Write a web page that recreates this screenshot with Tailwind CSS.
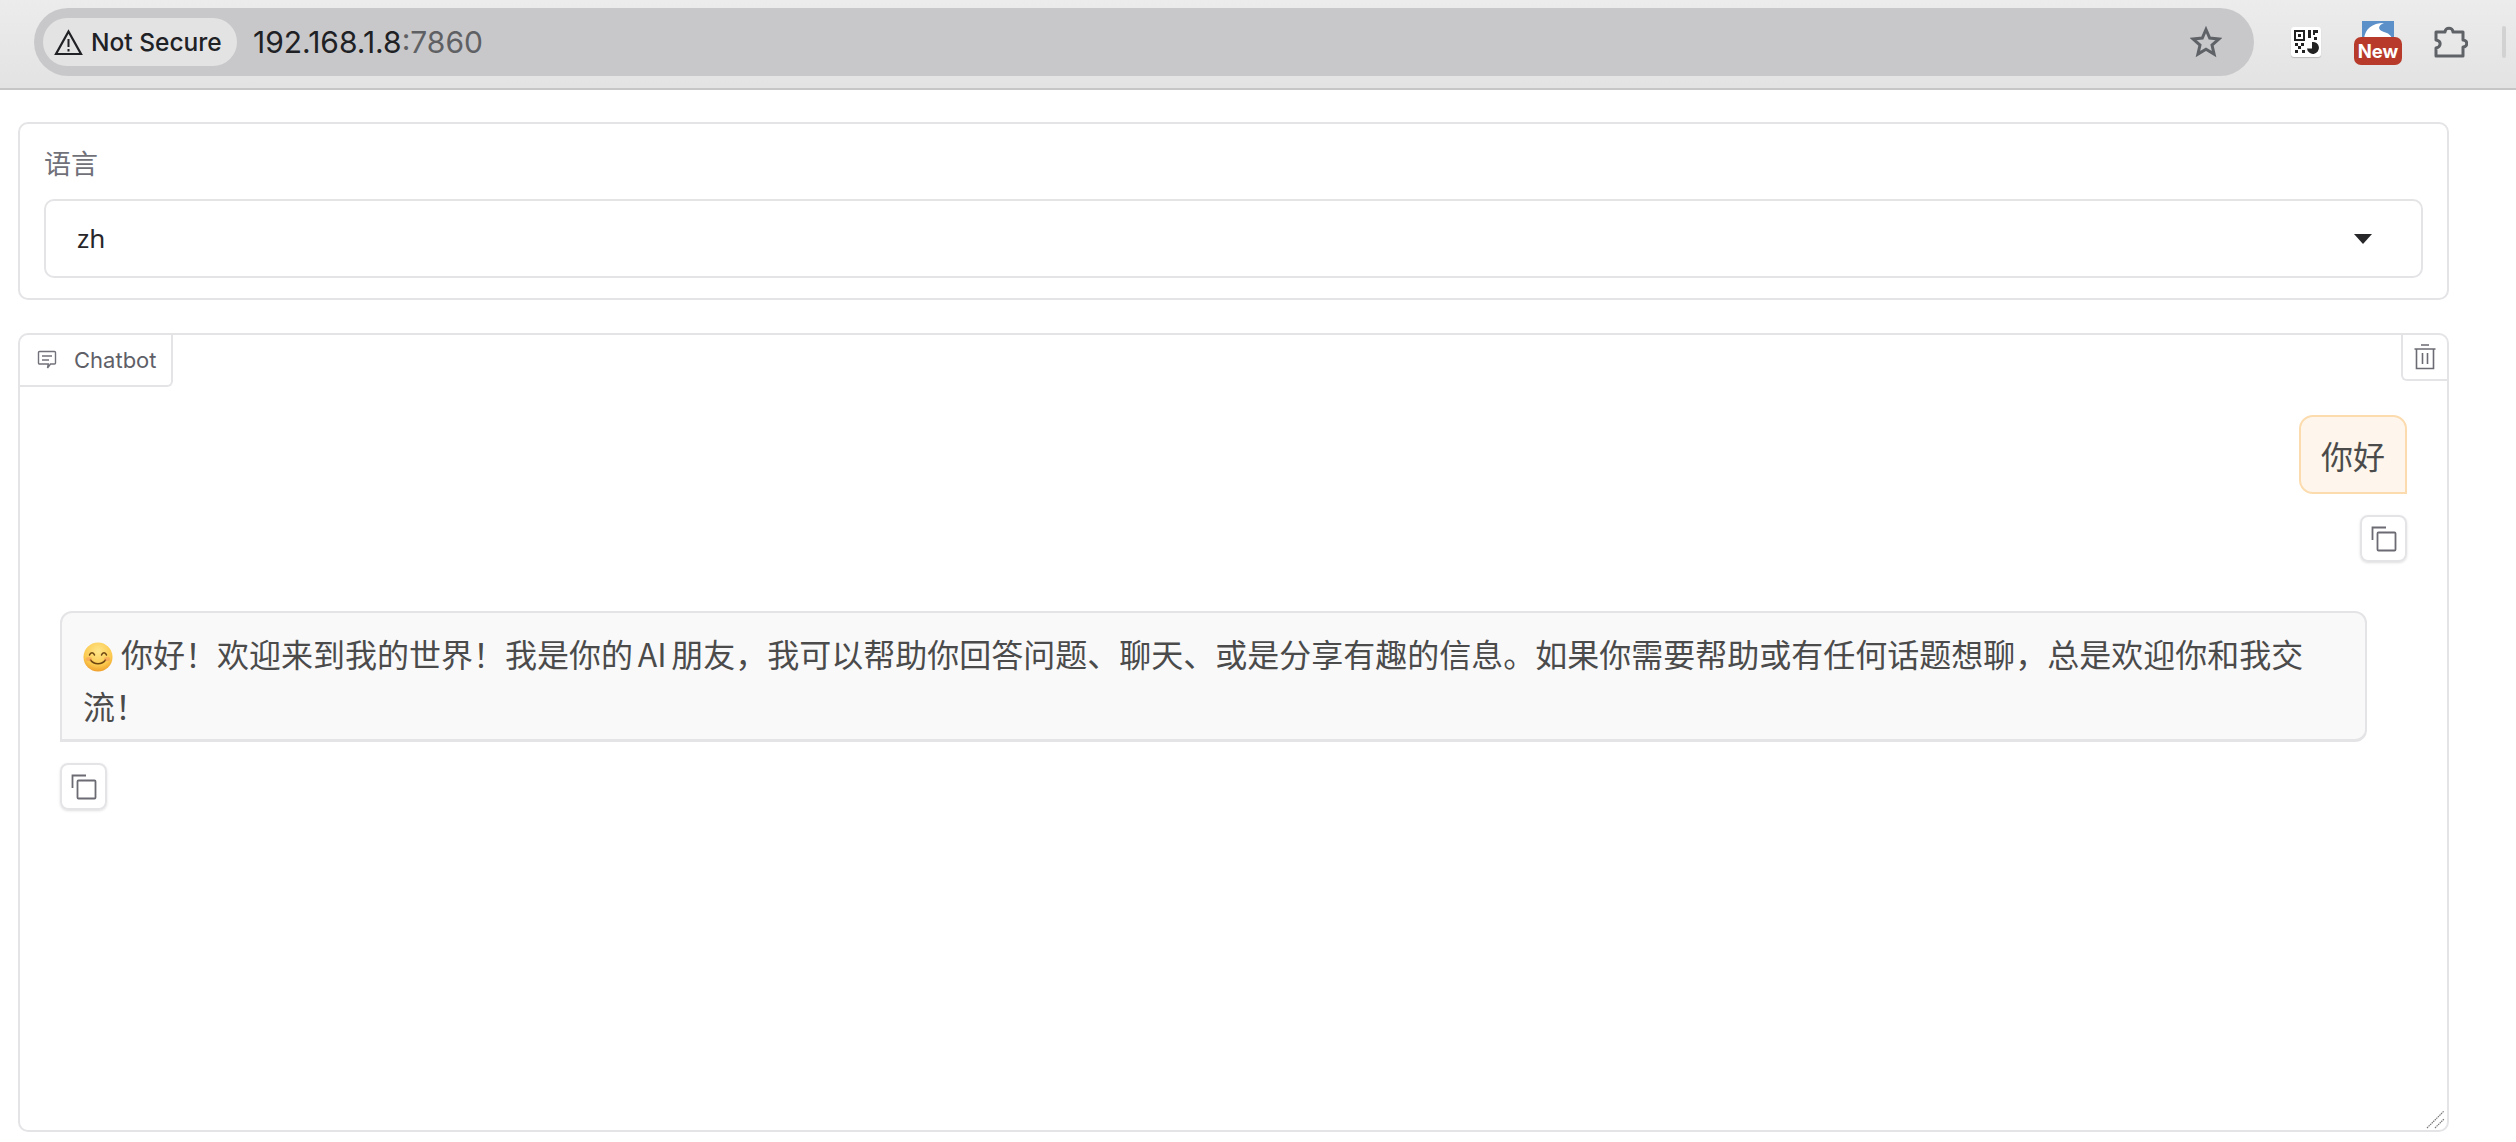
<!DOCTYPE html>
<html lang="zh">
<head>
    <meta charset="UTF-8">
    <title>Gradio</title>
    <script src="https://cdn.jsdelivr.net/npm/@tailwindcss/browser@4"></script>
</head>
<body class="bg-white overflow-hidden font-['Inter','Noto_Sans_CJK_SC',sans-serif]">

    <!-- browser toolbar -->
    <div class="flex items-center h-[90px] pl-[34px] pb-[4px] border-b-2 border-[#c6c6c6] bg-gradient-to-b from-[#ececec] to-[#e3e3e3]">
        <div class="flex items-center w-[2220px] h-[68px] pl-[9px] pr-[32px] rounded-full bg-[#c8c8ca]">
            <div class="flex items-center gap-[8px] w-[194px] h-[48px] pl-[11px] rounded-full bg-[#e3e3e4]">
                <svg width="29" height="27" viewBox="0 0 29 27" fill="none" stroke="#202124" stroke-width="2.200"><path d="M14.500 2.500 L27 25 H2 Z"/><path d="M14.500 10v8M14.500 20v2.500" stroke-width="2"/></svg>
                <span class="text-[24.500px] leading-none font-medium text-[#202124]">Not Secure</span>
            </div>
            <div class="ml-[16px] text-[30px] leading-none text-[#202124]">192.168.1.8<span class="text-[#5f6063]">:7860</span></div>
            <svg class="ml-auto" width="32" height="32" viewBox="0 0 32 32" fill="none" stroke="#5f6368" stroke-width="3"><path d="M16 3.500l3.700 8.600 9.300.8-7 6.100 2.100 9.100-8.100-4.800-8.100 4.800 2.100-9.100-7-6.100 9.300-.8z"/></svg>
        </div>

        <div class="ml-[37px] w-[30px] h-[30px] rounded-[3px] bg-white shadow-[0_1px_1px_#bbb]">
            <svg width="30" height="30" viewBox="0 0 30 30" fill="#222">
                <path fill-rule="evenodd" d="M3 3h11v11H3zM5 5v7h7V5z"/><path d="M7 7h3v3H7zM17 3h3v8h-3zM22 3h5v3h-3v2h-2zM23 10h3v3h-3zM4 16h3v3H4zM10 16h3v3h-3zM7 19h3v3H7zM4 23h3v3H4zM11 23h3v3h-3zM21 15a6 6 0 1 1-5 6.500h5z"/>
            </svg>
        </div>

        <div class="relative ml-[33px] w-[48px] h-[46px] mt-[6px]">
            <svg class="absolute left-[8px] top-[-1px]" width="32" height="18" viewBox="0 0 32 18">
                <rect width="32" height="18" fill="#5c90c9"/>
                <path d="M2 18C3 8 10 2 22 2c-6 2-7 7 0 9 4 1 7 3 8 7z" fill="#fff"/>
            </svg>
            <div class="absolute left-0 top-[15px] flex items-center justify-center w-[48px] h-[28px] rounded-[7px] bg-[#b83a2a] text-white text-[18.500px] font-bold leading-none">New</div>
        </div>

        <svg class="ml-[32px] mt-[2px]" width="34" height="34" viewBox="0 0 34 34" fill="none" stroke="#5f6368" stroke-width="3" stroke-linejoin="round"><path d="M2 6h9c0-5 8-5 8 0h10v8c5 0 5 7 0 7v9H2v-8c5-1 6-7 0-8z"/></svg>

        <div class="ml-[34px] w-[4px] h-[32px] rounded-full bg-[#d2d2d2]"></div>
    </div>

    <div class="pt-[32px] text-[#27272a]">

        <!-- language dropdown -->
        <div class="ml-[18px] w-[2431px] h-[178px] px-[24px] pt-[23px] border-2 border-[#e4e4e7] rounded-[10px]">
            <div class="text-[27px] leading-[36px] text-[#71717a]">语言</div>
            <div class="flex items-center justify-between mt-[16px] w-[2379px] h-[79px] pl-[31px] pr-[49px] border-2 border-[#e4e4e7] rounded-[10px]">
                <span class="text-[26px] font-['Noto_Sans','Noto_Sans_CJK_SC',sans-serif]">zh</span>
                <svg width="18" height="10" viewBox="0 0 18 10" fill="#27272a"><path d="M0 0h18l-9 10z"/></svg>
            </div>
        </div>

        <!-- chatbot -->
        <div class="relative ml-[18px] mt-[33px] w-[2431px] h-[799px] border-2 border-[#e4e4e7] rounded-[10px]">
            <div class="absolute left-0 top-0 flex items-center w-[153px] h-[52px] pl-[17px] border-r-2 border-b-2 border-[#e4e4e7] rounded-br-[6px]">
                <svg width="20" height="20" viewBox="0 0 20 20" fill="none" stroke="#71717a" stroke-width="1.400"><path d="M2.500 1.500h15a1 1 0 0 1 1 1v10.500a1 1 0 0 1-1 1h-4l-3 4 .8-4H2.500a1 1 0 0 1-1-1V2.500a1 1 0 0 1 1-1z"/><path d="M5 6h10M5 10h7"/></svg>
                <span class="ml-[17px] text-[22px] leading-none text-[#5f5f68]">Chatbot</span>
            </div>
            <div class="absolute right-0 top-0 flex items-center justify-center w-[46px] h-[46px] border-l-2 border-b-2 border-[#e4e4e7] rounded-bl-[6px]">
                <svg width="22" height="26" viewBox="0 0 22 26" fill="none" stroke="#6b6b73" stroke-width="1.600"><path d="M7 1h8M.5 5h21M2.500 5v19.500h17V5M8.500 9v11M13.500 9v11"/></svg>
            </div>

            <div class="flex flex-col pt-[80px] px-[40px] text-[#4b4b4b]">
                <div class="flex justify-end">
                    <div class="flex items-center justify-center w-[108px] h-[79px] border-2 border-[#fcdcae] bg-[#fef6ec] rounded-[14px] rounded-br-none text-[32px] font-['Noto_Sans_CJK_SC',sans-serif]">你好</div>
                </div>
                <div class="flex justify-end mt-[21px]">
                    <div class="flex items-center justify-center w-[47px] h-[47px] border-2 border-[#e4e4e7] rounded-[8px] shadow-sm">
                        <svg width="26" height="26" viewBox="0 0 26 26" fill="none" stroke="#6b6b73" stroke-width="1.800"><path d="M1.500 14V1.500H15"/><rect x="6.500" y="6.500" width="18" height="18" rx="1"/></svg>
                    </div>
                </div>

                <div class="mt-[49px] w-[2307px] h-[131px] pl-[21px] pr-[40px] pt-[14px] border-2 border-b-[3px] border-[#e4e4e7] bg-[#f9f9fa] rounded-[12px] rounded-bl-none text-[32px] leading-[52px] [word-spacing:-2.500px] font-['Noto_Sans_CJK_SC',sans-serif]">
                    <svg class="inline-block align-[-5px] mr-[8px]" width="30" height="30" viewBox="0 0 30 30">
                        <defs><radialGradient id="face" cx="50%" cy="30%" r="70%"><stop offset="0" stop-color="#ffe58a"/><stop offset=".7" stop-color="#fbc94e"/><stop offset="1" stop-color="#f0a02c"/></radialGradient></defs>
                        <circle cx="15" cy="15" r="14.500" fill="url(#face)"/>
                        <path d="M6.500 13c1-3 4-3 5 0M18.500 13c1-3 4-3 5 0" fill="none" stroke="#6b4410" stroke-width="1.500" stroke-linecap="round"/>
                        <path d="M7.500 18c3.500 5 11.500 5 15 0" fill="none" stroke="#6b4410" stroke-width="1.600" stroke-linecap="round"/>
                        <ellipse cx="6" cy="17" rx="3" ry="2" fill="#f58a5c" opacity=".45"/><ellipse cx="24" cy="17" rx="3" ry="2" fill="#f58a5c" opacity=".45"/>
                    </svg>你好！欢迎来到我的世界！我是你的 AI 朋友，我可以帮助你回答问题、聊天、或是分享有趣的信息。如果你需要帮助或有任何话题想聊，总是欢迎你和我交流！
                </div>
                <div class="mt-[21px] flex items-center justify-center w-[47px] h-[47px] border-2 border-[#e4e4e7] rounded-[8px] shadow-sm">
                    <svg width="26" height="26" viewBox="0 0 26 26" fill="none" stroke="#6b6b73" stroke-width="1.800"><path d="M1.500 14V1.500H15"/><rect x="6.500" y="6.500" width="18" height="18" rx="1"/></svg>
                </div>
            </div>

            <svg class="absolute right-[1px] bottom-[1px]" width="20" height="20" viewBox="0 0 20 20" fill="none" stroke="#777" stroke-width="1.200" stroke-dasharray="1.500 .7"><path d="M1 19L18 2M9 19l9-9"/></svg>
        </div>
    </div>
</body>
</html>
